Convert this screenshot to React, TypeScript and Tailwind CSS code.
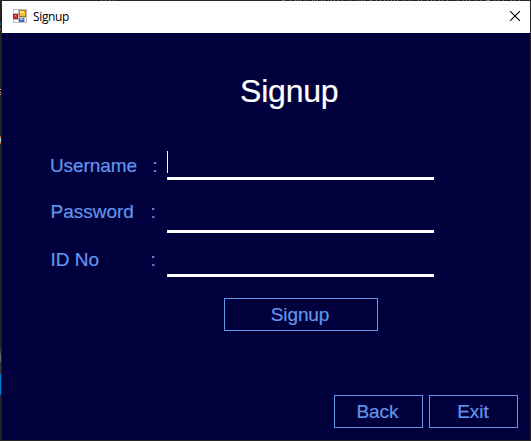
type FieldProps = {
  label: string;
  row: string;
  labelBox: string;
  colonBox: string;
  focused?: boolean;
};

function Field({ label, row, labelBox, colonBox, focused }: FieldProps) {
  return (
    <label className={`flex ${row}`}>
      <span className={`shrink-0 whitespace-nowrap leading-[21px] ${labelBox}`}>{label}</span>
      <span className={`shrink-0 leading-[21px] ${colonBox}`}>:</span>
      <span className="flex w-[267px] shrink-0 border-b-[3px] border-white">
        {focused && <span className="h-[22px] w-px bg-[#fffbe6]" />}
      </span>
    </label>
  );
}

function FormButton({ text, size }: { text: string; size: string }) {
  return (
    <button
      className={`flex h-[33px] justify-center border border-[#6495ed] pt-[5px] leading-[21px] ${size}`}
    >
      {text}
    </button>
  );
}

function FormIcon() {
  return (
    <svg width="14" height="14" viewBox="0 0 14 14" shapeRendering="crispEdges">
      <path d="M0 0h14v14H0z" fill="#bdbdbd" />
      <path d="M1 1h4v3H1zM1 11h4v2H1zM12 9h1v4h-1z" fill="#fff" />
      <path d="M0 5h5v5H0z" fill="#b51a12" />
      <path d="M1 6h3v3H1z" fill="#dc3b2c" />
      <path d="M2 6h1v1H2z" fill="#ff8a70" />
      <path d="M6 1h7v7H6z" fill="#b57b08" />
      <path d="M7 2h5v5H7z" fill="#f6c23c" />
      <path d="M7 2h4v2H7z" fill="#ffe49a" />
      <path d="M6 9h5v4H6z" fill="#3c70cf" />
      <path d="M7 9h3v2H7z" fill="#82b5fa" />
    </svg>
  );
}

const topSpecks = [
  101, 105, 109, 113, 282, 283, 284, 290, 295, 297, 300, 305, 312, 314, 317, 321, 324, 328, 331,
  334, 338, 342, 350, 358, 361, 364, 370, 371, 376, 380, 384, 387, 391, 394, 397, 403, 409, 418,
  421, 427, 431, 434, 439, 442, 447, 457, 463, 466, 469, 475, 480, 486, 487, 488, 489, 494, 498,
  503, 511, 514, 519,
];

const leftMarks = [
  "h-[2px] mt-[23px] bg-[#2c6388]",
  "h-px mt-[4px] bg-[#b56a42]",
  "h-px mt-[59px] bg-[#d69d85]",
  "h-px mt-[2px] bg-[#d69d85]",
  "h-px mt-px bg-[#d69d85]",
  "h-[2px] mt-[41px] bg-[#b06a20]",
  "h-[4px] bg-[#a5dcc0]",
  "h-[2px] bg-[#b06a20]",
  "h-[4px] mt-[205px] bg-[#3b3b3d]",
  "h-[9px] bg-[#686868]",
  "h-[12px] bg-[#3b3b3d]",
  "h-[21px] bg-[#007acc]",
];

export default function App() {
  return (
    <div className="flex h-[441px] w-[531px] flex-col overflow-hidden bg-[#252526] font-['Liberation_Sans',Arial,sans-serif]">
      <svg className="block shrink-0" width="531" height="1" shapeRendering="crispEdges">
        {topSpecks.map((x) => (
          <rect key={x} x={x} y="0" width="1" height="1" fill="#77777a" />
        ))}
      </svg>
      <div className="flex h-[439px]">
        <div className="-mt-px flex w-px shrink-0 flex-col">
          {leftMarks.map((mark, i) => (
            <div key={i} className={`shrink-0 ${mark}`} />
          ))}
        </div>
        <div className="w-px shrink-0 bg-[#202022]" />
        <main className="flex w-[528px] shrink-0 flex-col bg-[#00003c] text-[19px] text-[#6495ed] [-webkit-text-stroke:0.2px]">
          <header className="flex h-8 shrink-0 items-start bg-white pl-[11px] pt-2 text-black [-webkit-text-stroke:0]">
            <FormIcon />
            <span className="ml-[6px] font-['Open_Sans','Noto_Sans',sans-serif] text-[12px] leading-[16px] tracking-[-0.35px]">
              Signup
            </span>
            <svg
              className="ml-auto mr-[10px] mt-[2px]"
              width="10"
              height="10"
              viewBox="0 0 10 10"
              stroke="#000"
              strokeWidth="1.1"
            >
              <path d="M0 0L10 10M10 0L0 10" />
            </svg>
          </header>
          <h1 className="ml-[238px] mt-10 text-[32px] leading-9 tracking-[-0.2px] text-white">
            Signup
          </h1>
          <form className="mt-[42px] flex flex-col">
            <Field
              label="Username"
              row="ml-12 h-[29px]"
              labelBox="w-[102.5px] pt-1 tracking-[-0.1px]"
              colonBox="w-[14.5px] pt-1"
              focused
            />
            <Field
              label="Password"
              row="ml-[48.5px] mt-[15px] h-[38px]"
              labelBox="w-[100px] pt-[6px]"
              colonBox="w-[16.5px] pt-[6px]"
            />
            <Field
              label="ID No"
              row="ml-[48.5px] mt-3 h-8"
              labelBox="w-[100px] pt-1"
              colonBox="w-[16.5px] pt-1"
            />
          </form>
          <div className="ml-[222px] mt-[21px] flex">
            <FormButton text="Signup" size="w-[154px] pr-[2px] tracking-[-0.1px]" />
          </div>
          <footer className="mt-16 flex justify-end gap-[6px] pr-3">
            <FormButton text="Back" size="w-[89px] pr-[2px]" />
            <FormButton text="Exit" size="w-[89px] pr-px" />
          </footer>
        </main>
      </div>
    </div>
  );
}
